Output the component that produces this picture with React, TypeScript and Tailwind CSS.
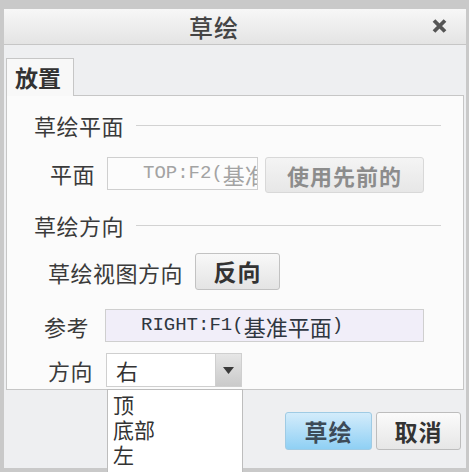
import React from "react";

const CJK = { fontFamily: '"Noto Sans CJK SC", "Noto Sans", sans-serif' };
const MONO = { fontFamily: '"Liberation Mono", "DejaVu Sans Mono", monospace' };

function MixedText({ parts }: { parts: string[] }) {
  return (
    <span className="whitespace-nowrap flex items-center">
      {parts.map((p, i) =>
        /[\u4e00-\u9fff]/.test(p) ? (
          <span key={i} className="text-[22px] leading-none" style={CJK}>
            {p}
          </span>
        ) : (
          <span key={i} className="text-[19px] leading-none" style={MONO}>
            {p}
          </span>
        )
      )}
    </span>
  );
}

function SectionHeader({ title, mt }: { title: string; mt: string }) {
  return (
    <div className={`flex items-center pl-[27px] pr-[22px] ${mt}`}>
      <span className="text-[22px] leading-[26px] tracking-[0.5px] text-[#3a3a3a]">{title}</span>
      <div className="ml-[12px] h-px flex-1 bg-[#d2d2d2]" />
    </div>
  );
}

export default function App() {
  return (
    <div className="w-[472px] h-[472px] bg-white overflow-hidden" style={CJK}>
      <div className="w-[469px] h-[472px] bg-[#c9c9c9] pt-[9px] pl-[4px] pr-[3px] pb-[4px]">
        <div className="relative flex h-[459px] flex-col bg-[#eeeff1]">
          {/* Title bar */}
          <div className="relative flex h-[36px] items-center justify-center border-b border-[#c6c6c6] bg-gradient-to-b from-[#f7f7f7] to-[#e4e4e4] pr-[42px]">
            <span className="text-[24px] font-medium leading-none text-[#444] tracking-[1px]">草绘</span>
            <svg className="absolute right-[19px] top-[10px]" width="15" height="14" viewBox="0 0 15 14">
              <path d="M2 1.5 L13 12.5 M13 1.5 L2 12.5" stroke="#555" strokeWidth="3.8" strokeLinecap="butt" />
            </svg>
          </div>

          {/* Tab strip */}
          <div className="flex h-[50px] items-end pl-[2px]">
            <div className="relative z-10 -mb-px flex h-[38px] w-[68px] items-center border border-b-0 border-[#c6c6c6] bg-[#f8f8f8] pl-[8px]">
              <span className="text-[23px] font-bold leading-none text-[#333]">放置</span>
            </div>
          </div>

          {/* Panel */}
          <div className="mx-[2px] h-[295px] border border-[#c6c6c6] bg-[#fbfbfb]">
            <SectionHeader title="草绘平面" mt="mt-[16px]" />

            <div className="mt-[19px] flex items-start pl-[43px]">
              <span className="mt-[3px] text-[22px] leading-[26px] tracking-[0.5px] text-[#3a3a3a]">平面</span>
              <div className="ml-[12px] flex h-[33px] w-[151px] items-center overflow-hidden border border-[#cfcfcf] bg-[#fcfcfc] pl-[35px] text-[#a3a3a3]">
                <MixedText parts={["TOP:F2(", "基准"]} />
              </div>
              <div className="ml-[7px] flex h-[36px] w-[159px] items-center justify-center rounded-[3px] border border-[#d8d8d8] bg-gradient-to-b from-[#f4f4f4] to-[#e7e7e7]">
                <span className="text-[22px] font-bold leading-none text-[#8c8c8c] tracking-[1px]">使用先前的</span>
              </div>
            </div>

            <SectionHeader title="草绘方向" mt="mt-[19px]" />

            <div className="mt-[15px] flex items-center pl-[41px]">
              <span className="text-[22px] leading-[26px] tracking-[0.5px] text-[#3a3a3a]">草绘视图方向</span>
              <div className="ml-[12px] flex h-[37px] w-[85px] items-center justify-center rounded-[3px] border border-[#c2c2c2] bg-gradient-to-b from-[#f8f8f8] to-[#e4e4e4]">
                <span className="text-[23px] font-bold leading-none text-[#333] tracking-[1px]">反向</span>
              </div>
            </div>

            <div className="mt-[19px] flex items-center pl-[37px]">
              <span className="text-[22px] leading-[26px] tracking-[0.5px] text-[#3a3a3a]">参考</span>
              <div className="ml-[16px] flex h-[33px] w-[319px] items-center overflow-hidden border border-[#cfcfcf] bg-[#f1eef9] pl-[35px] text-[#2f3640]">
                <MixedText parts={["RIGHT:F1(", "基准平面", ")"]} />
              </div>
            </div>

            <div className="mt-[11px] flex items-center pl-[41px]">
              <span className="text-[22px] leading-[26px] tracking-[0.5px] text-[#3a3a3a]">方向</span>
              <div className="ml-[13px] flex h-[34px] w-[136px] border border-[#cfcfcf] bg-white">
                <div className="flex flex-1 items-center pl-[9px]">
                  <span className="text-[22px] leading-none text-[#333]">右</span>
                </div>
                <div className="flex w-[26px] items-center justify-center border-l border-[#cfcfcf] bg-gradient-to-b from-[#e6e6e6] to-[#cacaca]">
                  <svg width="11" height="7" viewBox="0 0 11 7">
                    <path d="M0 0 L11 0 L5.5 7 Z" fill="#3a3a3a" />
                  </svg>
                </div>
              </div>
            </div>
          </div>

          {/* Bottom buttons */}
          <div className="flex flex-1 items-start justify-end pr-[5px] pt-[22px]">
            <div className="flex h-[38px] w-[87px] items-center justify-center rounded-[3px] border border-[#9fcbe4] bg-gradient-to-b from-[#d3ecfb] to-[#8fd0f4]">
              <span className="text-[23px] font-bold leading-none text-[#3d4b58] tracking-[1px]">草绘</span>
            </div>
            <div className="ml-[4px] flex h-[38px] w-[85px] items-center justify-center rounded-[3px] border border-[#bdbdbd] bg-gradient-to-b from-[#fbfbfb] to-[#e6e6e6]">
              <span className="text-[23px] font-bold leading-none text-[#333] tracking-[1px]">取消</span>
            </div>
          </div>

          {/* Dropdown list */}
          <div className="absolute left-[103px] top-[380px] z-20 flex h-[90px] w-[136px] flex-col border border-[#bdbdbd] bg-white pl-[5px] pt-[2px]">
            <span className="text-[21px] leading-[25px] text-[#333]">顶</span>
            <span className="text-[21px] leading-[25px] text-[#333]">底部</span>
            <span className="text-[21px] leading-[25px] text-[#333]">左</span>
          </div>
        </div>
      </div>
    </div>
  );
}
